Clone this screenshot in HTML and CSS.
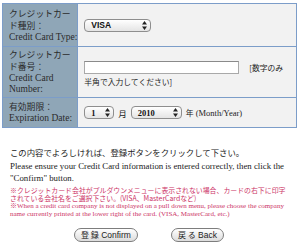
FILE: index.html
```html
<!DOCTYPE html>
<html lang="ja">
<head>
  <meta charset="UTF-8">
  <title>Credit Card</title>
  <link rel="stylesheet" href="styles.css">
</head>
<body>
  <div class="page">
    <table class="card-form">
      <tr class="row-type">
        <th><span class="ja">クレジットカー<br>ド種別：</span><br>Credit Card Type:</th>
        <td>
          <span class="select select-card">VISA
            <svg width="5" height="9" viewBox="0 0 5 9"><path d="M2.5 0L5 3.5H0z M2.5 9L5 5.5H0z" fill="#222"/></svg>
          </span>
        </td>
      </tr>
      <tr class="row-number">
        <th><span class="ja">クレジットカー<br>ド番号：</span><br>Credit Card<br>Number:</th>
        <td>
          <div class="num-line"><input class="num-input" type="text"><span class="ja hint">[数字のみ</span></div>
          <div class="ja hint">半角で入力してください]</div>
        </td>
      </tr>
      <tr class="row-exp">
        <th><span class="ja">有効期限：</span><br>Expiration Date:</th>
        <td>
          <div class="exp-line">
            <span class="select select-month">1
              <svg width="5" height="9" viewBox="0 0 5 9"><path d="M2.5 0L5 3.5H0z M2.5 9L5 5.5H0z" fill="#222"/></svg>
            </span>
            <span class="ja unit">月</span>
            <span class="select select-year">2010
              <svg width="5" height="9" viewBox="0 0 5 9"><path d="M2.5 0L5 3.5H0z M2.5 9L5 5.5H0z" fill="#222"/></svg>
            </span>
            <span class="unit"><span class="ja">年</span> (Month/Year)</span>
          </div>
        </td>
      </tr>
    </table>

    <p class="lead ja">この内容でよろしければ、登録ボタンをクリックして下さい。</p>
    <p class="lead-en">Please ensure your Credit Card information is entered correctly, then click the "Confirm" button.</p>
    <p class="note ja">※クレジットカード会社がプルダウンメニューに表示されない場合、カードの右下に印字されている会社名をご選択下さい。(VISA、MasterCardなど)</p>
    <p class="note">※When a credit card company is not displayed on a pull down menu, please choose the company name currently printed at the lower right of the card. (VISA, MasterCard, etc.)</p>

    <div class="buttons">
      <button class="btn btn-confirm"><span class="ja">登 録</span> Confirm</button>
      <button class="btn btn-back"><span class="ja">戻 る</span> Back</button>
    </div>
  </div>
</body>
</html>
```

FILE: styles.css
```css
* {
  box-sizing: border-box;
}

body {
  margin: 0;
  background-color: white;
  color: #222;
  font-family: 'Liberation Serif', 'Noto Sans CJK JP', serif;
  font-size: 9.5px;
}

.ja {
  font-family: 'Noto Sans CJK JP', sans-serif;
}

.page {
  padding: 3px 4px 0 2px;
}

.card-form {
  width: 295px;
  border-collapse: collapse;
  border: 1px solid #6f93c4;
}

.card-form th,
.card-form td {
  border: 1px solid #7c9dc9;
  vertical-align: middle;
}

.card-form th {
  width: 74px;
  padding: 0 0 0 6px;
  background-color: #8fa6b7;
  color: #2b2b2b;
  font-weight: normal;
  text-align: left;
  line-height: 11px;
  white-space: nowrap;
}

.card-form th .ja {
  font-size: 8.8px;
}

.card-form td {
  padding: 0 0 0 6px;
  background-color: #f2f2f2;
}

.row-type {
  height: 43px;
}

.row-number {
  height: 51px;
}

.row-exp {
  height: 30px;
}

.select {
  display: inline-flex;
  align-items: center;
  justify-content: space-between;
  height: 13px;
  padding: 0 3px 0 6px;
  border: 1px solid #8e8e8e;
  border-radius: 4px;
  background: linear-gradient(#ffffff, #e4e4e4);
  font-family: 'Liberation Sans', sans-serif;
  font-weight: bold;
  font-size: 8.5px;
  color: #111;
  vertical-align: middle;
}

.select-card {
  width: 67px;
}

.select-month {
  width: 30px;
  font-family: 'Liberation Serif', serif;
}

.select-year {
  width: 51px;
  font-family: 'Liberation Serif', serif;
}

.num-line {
  display: flex;
  align-items: center;
  gap: 10px;
  margin-top: 3px;
}

.num-input {
  width: 155px;
  height: 13px;
  border: 1px solid #a9a9a9;
  border-top-color: #8a8a8a;
  background-color: white;
  padding: 0;
}

.hint {
  font-size: 7.8px;
  line-height: 11px;
}

.num-line + .hint {
  margin-top: 2px;
}

.exp-line {
  display: flex;
  align-items: center;
  gap: 4px;
}

.unit {
  font-size: 8.5px;
}

.unit .ja {
  font-size: 7.8px;
}

.lead {
  margin: 18px 0 0 8px;
  font-size: 8.4px;
  line-height: 12px;
}

.lead-en {
  margin: 2px 6px 0 8px;
  font-size: 8.8px;
  line-height: 12px;
}

.note {
  margin: 0 4px 0 8px;
  color: #cc3366;
  font-size: 7px;
  line-height: 8px;
}

.note.ja {
  margin-top: 2px;
  font-size: 6.9px;
}

.buttons {
  display: flex;
  justify-content: center;
  gap: 33px;
  margin-top: 10px;
}

.btn {
  height: 14px;
  padding: 0 6px;
  border: 1px solid #7d7d7d;
  border-radius: 8px;
  background: linear-gradient(#ffffff, #dcdcdc);
  font-family: 'Liberation Sans', sans-serif;
  font-size: 8.5px;
  color: #222;
  line-height: 12px;
}

.btn .ja {
  font-size: 8px;
}
```
